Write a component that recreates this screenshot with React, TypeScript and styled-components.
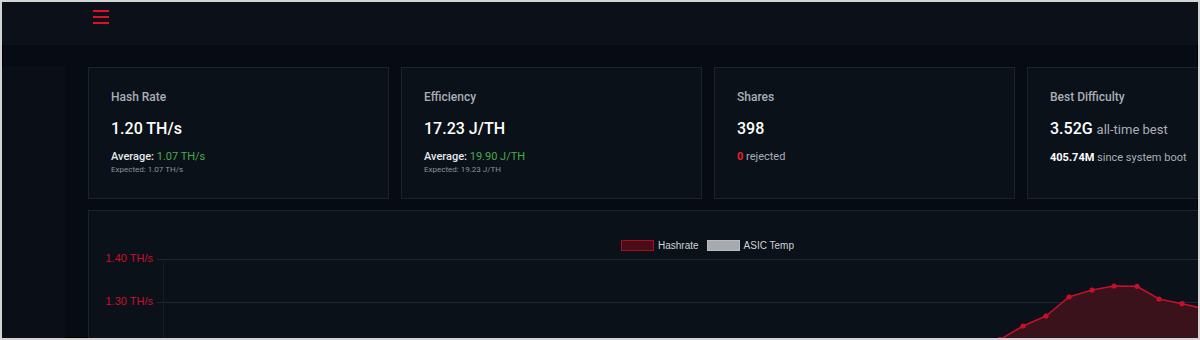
import styled, { createGlobalStyle } from 'styled-components';

const GlobalStyle = createGlobalStyle`
  html, body {
    margin: 0;
    padding: 0;
    background: #070b13;
  }
  * {
    box-sizing: border-box;
  }
`;

type Stat = {
  title: string;
  value: string;
  unit?: string;
};

const stats: Stat[] = [
  { title: 'Hash Rate', value: '1.20 TH/s' },
  { title: 'Efficiency', value: '17.23 J/TH' },
  { title: 'Shares', value: '398' },
  { title: 'Best Difficulty', value: '3.52G', unit: 'all-time best' },
];

// hashrate samples in svg coords (origin at chart card inner left / below legend)
const points: [number, number][] = [
  [797, 160],
  [820, 140],
  [843, 122],
  [866, 110],
  [889, 97],
  [911, 86.6],
  [934, 73],
  [957, 63],
  [980, 44],
  [1003, 37],
  [1025, 33],
  [1048, 33.3],
  [1070, 46],
  [1093, 50.7],
  [1116, 56],
  [1139, 61],
  [1162, 58],
  [1185, 64],
  [1208, 70],
];

function App() {
  const line = points.map(([x, y]) => `${x},${y}`).join(' ');
  const area = `${points[0][0]},200 ${line} ${points[points.length - 1][0]},200`;

  return (
    <Frame>
      <GlobalStyle />
      <TopBar>
        <MenuButton aria-label="menu">
          <span />
          <span />
          <span />
        </MenuButton>
      </TopBar>
      <Body>
        <Sidebar />
        <Main>
          <CardRow>
            <Card>
              <CardTitle>{stats[0].title}</CardTitle>
              <CardValue>{stats[0].value}</CardValue>
              <Average>
                Average: <Green>1.07 TH/s</Green>
              </Average>
              <Expected>Expected: 1.07 TH/s</Expected>
            </Card>
            <Card>
              <CardTitle>{stats[1].title}</CardTitle>
              <CardValue>{stats[1].value}</CardValue>
              <Average>
                Average: <Green>19.90 J/TH</Green>
              </Average>
              <Expected>Expected: 19.23 J/TH</Expected>
            </Card>
            <Card>
              <CardTitle>{stats[2].title}</CardTitle>
              <CardValue>{stats[2].value}</CardValue>
              <SubLine>
                <Red>0</Red> rejected
              </SubLine>
            </Card>
            <Card>
              <CardTitle>{stats[3].title}</CardTitle>
              <CardValue>
                {stats[3].value} <Unit>{stats[3].unit}</Unit>
              </CardValue>
              <SubLine>
                <Strong>405.74M</Strong> since system boot
              </SubLine>
            </Card>
          </CardRow>
          <ChartCard>
            <Legend>
              <LegendItem>
                <Swatch $fill="#4a0d17" $border="#a3101f" />
                Hashrate
              </LegendItem>
              <LegendItem>
                <Swatch $fill="#a7aaaf" $border="#b9bcc0" />
                ASIC Temp
              </LegendItem>
            </Legend>
            <svg width="1237" height="120" viewBox="0 0 1237 120">
              <line x1="68" y1="6.5" x2="1237" y2="6.5" stroke="#1f2631" strokeWidth="1" />
              <line x1="68" y1="49.5" x2="1237" y2="49.5" stroke="#1f2631" strokeWidth="1" />
              <line x1="74.5" y1="6" x2="74.5" y2="120" stroke="#161c25" strokeWidth="1" />
              <text x="64" y="9" textAnchor="end" fill="#c8102c" fontSize="11" fontFamily="'Liberation Sans', Arial, sans-serif">
                1.40 TH/s
              </text>
              <text x="64" y="52" textAnchor="end" fill="#c8102c" fontSize="11" fontFamily="'Liberation Sans', Arial, sans-serif">
                1.30 TH/s
              </text>
              <polygon points={area} fill="#3a121b" />
              <polyline points={line} fill="none" stroke="#c5102c" strokeWidth="1.5" />
              {points.map(([x, y]) => (
                <circle key={x} cx={x} cy={y} r="2.6" fill="#c5102c" />
              ))}
            </svg>
          </ChartCard>
        </Main>
      </Body>
    </Frame>
  );
}

export default App;

const Frame = styled.div`
  width: 1200px;
  height: 340px;
  overflow: hidden;
  border: 2px solid #d4d4d4;
  box-shadow: inset 0 0 0 1px #000;
  background: #070b13;
  display: flex;
  flex-direction: column;
  font-family: Roboto, 'Noto Sans', sans-serif;
`;

const TopBar = styled.header`
  flex: 0 0 43px;
  background: #0c1119;
  display: flex;
  align-items: flex-start;
  padding: 7px 0 0 91px;
`;

const MenuButton = styled.button`
  width: 16px;
  height: 14px;
  padding: 0;
  border: none;
  background: none;
  display: flex;
  flex-direction: column;
  justify-content: space-between;
  margin-top: 1px;
  cursor: pointer;

  span {
    display: block;
    height: 2px;
    width: 16px;
    background: #e0102b;
  }
`;

const Body = styled.div`
  flex: 1;
  display: flex;
  min-height: 0;
`;

const Sidebar = styled.aside`
  flex: 0 0 63px;
  margin-top: 22px;
  background: #0a0f17;
`;

const Main = styled.main`
  flex: 0 0 auto;
  padding: 22px 0 0 23px;
  display: flex;
  flex-direction: column;
  gap: 11px;
`;

const CardRow = styled.div`
  display: grid;
  grid-template-columns: repeat(4, 301px);
  gap: 12px;
`;

const Card = styled.div`
  height: 132px;
  background: #0b1119;
  border: 1px solid #1c2330;
  padding: 22px 22px 0;
  display: flex;
  flex-direction: column;
`;

const CardTitle = styled.div`
  font-size: 12px;
  line-height: 14px;
  color: #a9aeb6;
  font-weight: 500;
`;

const CardValue = styled.div`
  margin-top: 15px;
  font-size: 16px;
  line-height: 20px;
  font-weight: 500;
  color: #ffffff;
  white-space: nowrap;
`;

const Unit = styled.span`
  font-size: 13px;
  font-weight: 400;
  color: #a9aeb6;
`;

const Average = styled.div`
  margin-top: 11px;
  font-size: 11px;
  line-height: 14px;
  font-weight: 500;
  color: #e6e8eb;
`;

const Green = styled.span`
  color: #43ad48;
  font-weight: 400;
`;

const Expected = styled.div`
  margin-top: 1px;
  font-size: 8px;
  line-height: 10px;
  color: #8c9199;
`;

const SubLine = styled.div`
  margin-top: 11px;
  font-size: 11px;
  line-height: 14px;
  color: #a9aeb6;
  white-space: nowrap;
`;

const Red = styled.span`
  color: #e8202b;
  font-weight: 700;
`;

const Strong = styled.span`
  color: #ffffff;
  font-weight: 700;
`;

const ChartCard = styled.div`
  width: 1239px;
  height: 200px;
  background: #0b1119;
  border: 1px solid #1c2330;
  padding-top: 29px;
  display: flex;
  flex-direction: column;
`;

const Legend = styled.div`
  display: flex;
  justify-content: center;
  gap: 8px;
  height: 13px;
  font-family: 'Liberation Sans', Arial, sans-serif;
  font-size: 10px;
  color: #cdd1d6;
`;

const LegendItem = styled.div`
  display: flex;
  align-items: flex-start;
  gap: 4px;
  line-height: 11px;
`;

const Swatch = styled.span<{ $fill: string; $border: string }>`
  width: 33px;
  height: 11px;
  background: ${(p) => p.$fill};
  border: 1px solid ${(p) => p.$border};
`;
